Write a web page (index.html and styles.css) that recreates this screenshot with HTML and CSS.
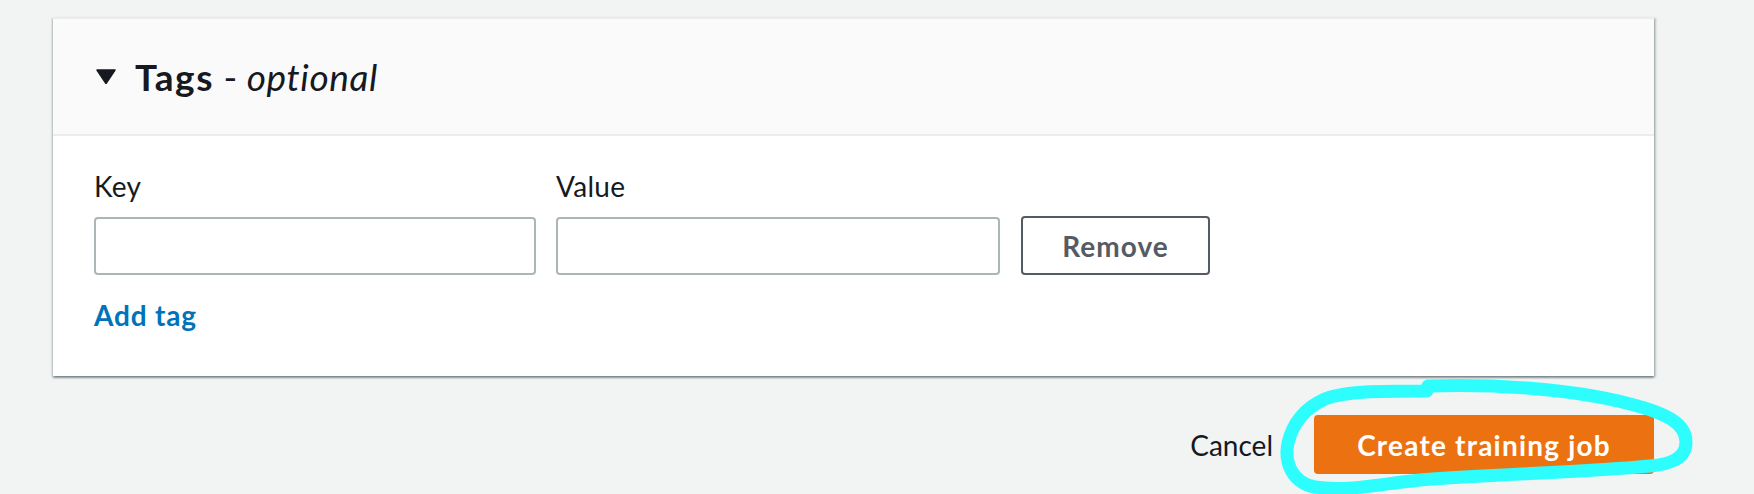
FILE: index.html
```html
<!DOCTYPE html>
<html lang="en">
<head>
<meta charset="utf-8">
<title>Tags</title>
<link rel="stylesheet" href="styles.css">
</head>
<body>
<div class="page">
  <section class="card">
    <header class="card-header">
      <svg class="caret" width="20" height="15" viewBox="0 0 20 15"><polygon points="1,1 19,1 10,14.5" fill="#16191f" stroke="#16191f" stroke-width="1.5" stroke-linejoin="round"/></svg>
      <h2 class="title"><span class="title-main">Tags</span> - <i class="title-opt">optional</i></h2>
    </header>
    <div class="card-body">
      <div class="tag-row">
        <div class="field field-key">
          <label class="label">Key</label>
          <input class="input" type="text">
        </div>
        <div class="field field-value">
          <label class="label">Value</label>
          <input class="input" type="text">
        </div>
        <button class="btn-normal" type="button">Remove</button>
      </div>
      <a class="add-tag" href="#">Add tag</a>
    </div>
  </section>
  <div class="actions">
    <button class="btn-link" type="button">Cancel</button>
    <button class="btn-primary" type="button">Create training job</button>
  </div>
  <svg class="annotation" width="1754" height="494" viewBox="0 0 1754 494">
    <path d="M 1428 386 C 1490 384, 1570 388, 1630 404 C 1670 414, 1686 425, 1686 442 C 1686 458, 1672 464, 1650 466 C 1590 472, 1500 474, 1420 480 C 1380 484, 1345 492, 1315 487 C 1292 483, 1284 462, 1288 443 C 1293 422, 1305 408, 1325 399 C 1345 391, 1380 391, 1427 391" fill="none" stroke="#2efdfe" stroke-width="13" stroke-linecap="round" stroke-linejoin="round"/>
  </svg>
</div>
</body>
</html>
```
FILE: styles.css
```css
* { box-sizing: border-box; }
html, body { margin: 0; padding: 0; }
body {
  background: #f2f3f3;
  font-family: Lato, "Open Sans", "Liberation Sans", sans-serif;
  color: #16191f;
}
.page {
  position: relative;
  width: 1754px;
  height: 494px;
  overflow: hidden;
  padding: 17px 100px 0 53px;
}
.card {
  background: #ffffff;
  border-top: 2px solid #eaeded;
  box-shadow: 0 2px 2px 0 rgba(0, 28, 36, 0.35), 2px 1px 2px 0 rgba(0, 28, 36, 0.2), -1px 1px 2px 0 rgba(0, 28, 36, 0.15);
}
.card-header {
  height: 117px;
  background: #fafafa;
  border-bottom: 2px solid #eaeded;
  display: flex;
  align-items: center;
  padding-left: 43px;
  gap: 19px;
}
.caret { display: block; flex: none; }
.title {
  margin: 0;
  font-size: 37px;
  line-height: 44px;
  font-weight: 400;
  letter-spacing: 0;
  color: #16191f;
}
.title-main { font-weight: 700; letter-spacing: 1.6px; }
.title-opt { font-style: italic; font-weight: 400; letter-spacing: 0.6px; }
.card-body {
  height: 240px;
  padding: 30px 0 0 41px;
}
.tag-row {
  display: flex;
  align-items: flex-end;
  gap: 20px;
}
.field { display: flex; flex-direction: column; }
.field-key { width: 442px; }
.field-value { width: 444px; }
.label {
  font-size: 28px;
  line-height: 40px;
  margin-bottom: 11px;
  letter-spacing: 0.3px;
  color: #16191f;
}
.input {
  height: 58px;
  width: 100%;
  border: 2px solid #aab7b8;
  border-radius: 4px;
  background: #fff;
  font: inherit;
  font-size: 28px;
  padding: 0 18px;
}
.btn-normal {
  width: 189px;
  height: 59px;
  margin-left: 1px;
  border: 2px solid #545b64;
  border-radius: 4px;
  background: #fff;
  color: #545b64;
  font-family: inherit;
  font-size: 28px;
  font-weight: 700;
  letter-spacing: 1px;
  padding: 0;
}
.add-tag {
  display: inline-block;
  margin-top: 20px;
  font-size: 28px;
  line-height: 40px;
  font-weight: 700;
  letter-spacing: 0.8px;
  color: #0073bb;
  text-decoration: none;
}
.actions {
  display: flex;
  justify-content: flex-end;
  align-items: center;
  margin-top: 39px;
  gap: 41px;
}
.btn-link {
  border: 0;
  background: transparent;
  padding: 0;
  font-family: inherit;
  font-size: 28px;
  line-height: 40px;
  color: #16191f;
}
.btn-primary {
  width: 340px;
  height: 59px;
  border: 0;
  border-radius: 4px;
  background: #ec7211;
  color: #ffffff;
  font-family: inherit;
  font-size: 28px;
  font-weight: 700;
  letter-spacing: 1.2px;
  padding: 0;
}
.annotation {
  position: absolute;
  left: 0;
  top: 0;
  pointer-events: none;
}
```
